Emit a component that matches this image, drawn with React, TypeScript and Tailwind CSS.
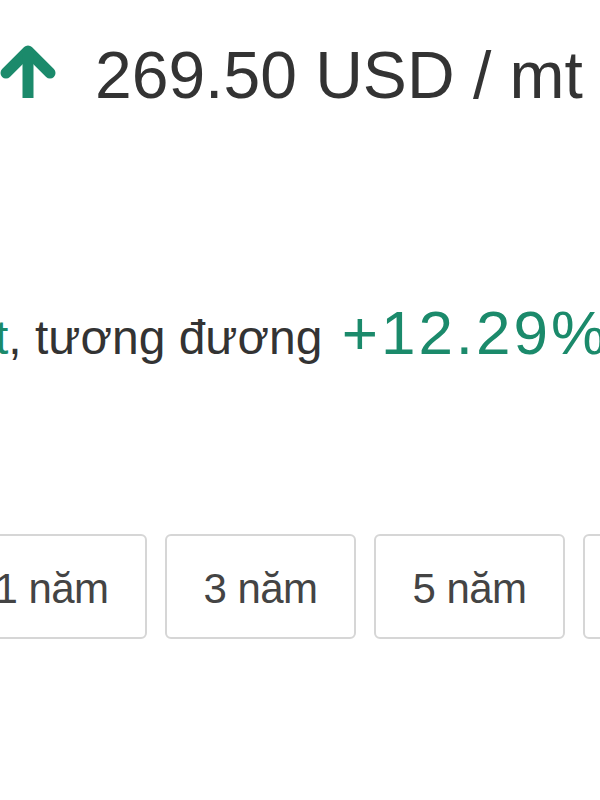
import React from "react";

const periods = ["1 năm", "3 năm", "5 năm", "10 năm"];

function ArrowUp() {
  return (
    <svg width="56" height="54" viewBox="0 0 56 54" className="shrink-0 mt-[2px]">
      <polyline
        points="6,29 28,7 50,29"
        fill="none"
        stroke="#1b8a6b"
        strokeWidth="11"
        strokeLinecap="round"
        strokeLinejoin="round"
      />
      <line x1="28" y1="10" x2="28" y2="54" stroke="#1b8a6b" strokeWidth="11" />
    </svg>
  );
}

export default function App() {
  return (
    <div className="w-[600px] h-[800px] bg-white overflow-hidden whitespace-nowrap font-['Liberation_Sans',Arial,sans-serif] text-[#333]">
      {/* Giá hiện tại */}
      <div className="flex items-start pt-[42px]">
        <ArrowUp />
        <span className="ml-[39px] text-[66px] leading-none">269.50 USD / mt</span>
      </div>

      {/* Thay đổi */}
      <div className="mt-[194px] text-[48px] leading-none ml-[-45px]">
        <span className="text-[#1b8a6b]">mt</span>
        <span>, tương đương </span>
        <span className="ml-[6px] text-[62px] leading-none tracking-[3px] text-[#1b8a6b]">+12.29%</span>
      </div>

      {/* Khoảng thời gian */}
      <div className="flex gap-[18px] ml-[-44px] mt-[170px]">
        {periods.map((p) => (
          <button
            key={p}
            className="w-[191px] h-[105px] shrink-0 flex items-center justify-center pt-[4px] border-2 border-[#d6d6d6] rounded-md bg-white text-[42px] leading-none tracking-[-0.5px] text-[#444]"
          >
            {p}
          </button>
        ))}
      </div>
    </div>
  );
}
